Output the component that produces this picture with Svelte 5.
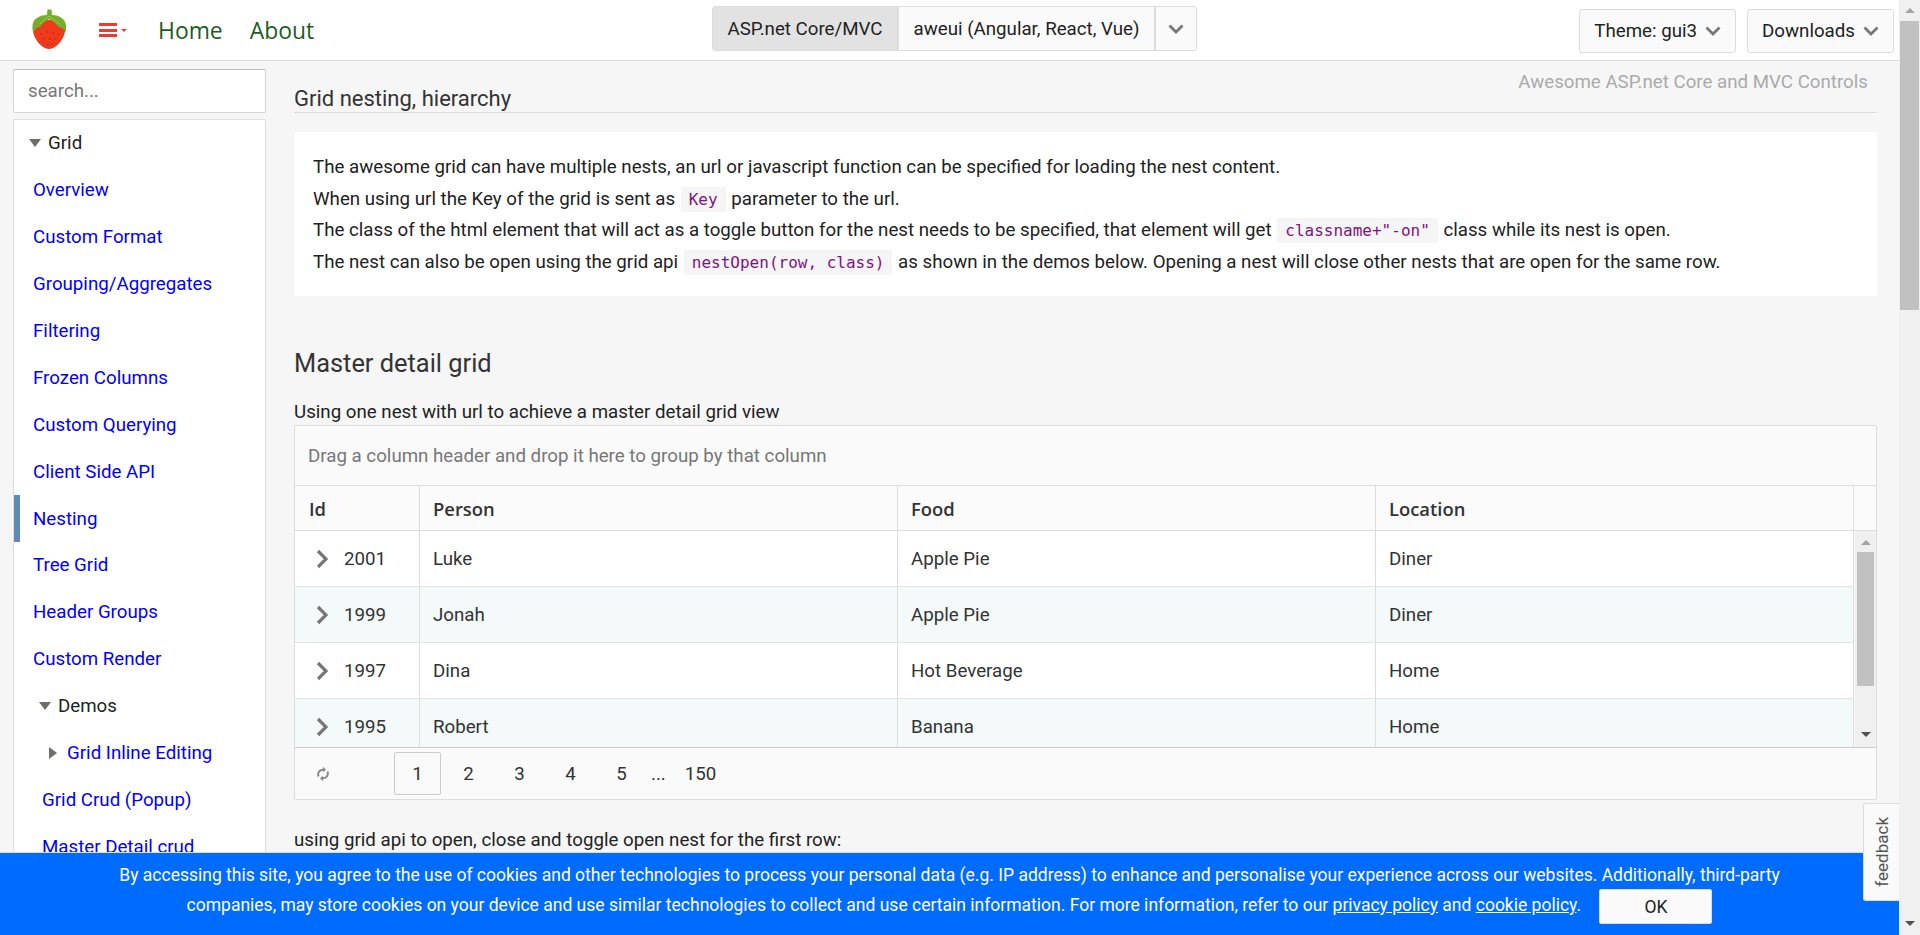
<script lang="ts">
  const nav = [
    "Overview",
    "Custom Format",
    "Grouping/Aggregates",
    "Filtering",
    "Frozen Columns",
    "Custom Querying",
    "Client Side API",
    "Nesting",
    "Tree Grid",
    "Header Groups",
    "Custom Render",
  ];

  const rows = [
    { id: 2001, person: "Luke", food: "Apple Pie", location: "Diner" },
    { id: 1999, person: "Jonah", food: "Apple Pie", location: "Diner" },
    { id: 1997, person: "Dina", food: "Hot Beverage", location: "Home" },
    { id: 1995, person: "Robert", food: "Banana", location: "Home" },
  ];

  const pages = ["2", "3", "4", "5"];
</script>

<div class="page">
  <div class="viewport">
    <header class="top">
      <svg class="logo" viewBox="0 0 36 42" width="36" height="42" aria-label="logo">
        <path d="M2 18C0 28 10 41 18 41s18-13 16-23C32 10 4 10 2 18z" fill="#f03a1c" />
        <path d="M16.5 1.5h4l.5 5.5c6 0 13 3 14 10v7c-2-3-4-4-7-5l-4-4-6-4-6 4-3 4c-1 0-4 1-7 5l-.5-5C1 10 10 7 16 7z" fill="#76ad2a" />
        <path d="M18 8l-9 8M18 8l10 8" stroke="#9ccc4a" stroke-width="1" fill="none" />
        <g fill="#b3260f">
          <circle cx="10" cy="26" r=".8" /><circle cx="16" cy="24" r=".8" /><circle cx="22" cy="25" r=".8" />
          <circle cx="27" cy="26" r=".8" /><circle cx="13" cy="31" r=".8" /><circle cx="19" cy="31" r=".8" />
          <circle cx="24" cy="31" r=".8" /><circle cx="17" cy="36" r=".8" /><circle cx="21" cy="36" r=".8" />
        </g>
      </svg>
      <button class="burger" aria-label="menu">
        <span class="bars"><i></i><i></i><i></i></span>
        <span class="caret"></span>
      </button>
      <a class="toplink" href="#home">Home</a>
      <a class="toplink" href="#about">About</a>

      <div class="switch">
        <span class="seg active">ASP.net Core/MVC</span>
        <span class="seg">aweui (Angular, React, Vue)</span>
        <span class="seg more">
          <svg width="16" height="10" viewBox="0 0 16 10"><path d="M1.5 1.5L8 8l6.5-6.5" class="chev" /></svg>
        </span>
      </div>

      <div class="actions">
        <button class="drop theme">
          Theme: gui3
          <svg width="16" height="10" viewBox="0 0 16 10"><path d="M1.5 1.5L8 8l6.5-6.5" class="chev" /></svg>
        </button>
        <button class="drop">
          Downloads
          <svg width="16" height="10" viewBox="0 0 16 10"><path d="M1.5 1.5L8 8l6.5-6.5" class="chev" /></svg>
        </button>
      </div>
    </header>

    <div class="body">
      <aside class="side">
        <input class="search" placeholder="search..." />
        <nav class="tree">
          <div class="node head"><span class="tri down"></span>Grid</div>
          {#each nav as item}
            <a class="node" class:current={item === "Nesting"} href="#item">{item}</a>
          {/each}
          <div class="node head sub"><span class="tri down"></span>Demos</div>
          <a class="node sub2" href="#item"><span class="tri right"></span>Grid Inline Editing</a>
          <a class="node sub" href="#item">Grid Crud (Popup)</a>
          <a class="node sub" href="#item">Master Detail crud</a>
        </nav>
      </aside>

      <main class="main">
        <div class="titlebar">
          <h1>Grid nesting, hierarchy</h1>
          <span class="tagline">Awesome ASP.net Core and MVC Controls</span>
        </div>

        <section class="info">
          <p>The awesome grid can have multiple nests, an url or javascript function can be specified for loading the nest content.</p>
          <p>When using url the Key of the grid is sent as <code>Key</code> parameter to the url.</p>
          <p>The class of the html element that will act as a toggle button for the nest needs to be specified, that element will get <code>classname+"-on"</code> class while its nest is open.</p>
          <p>The nest can also be open using the grid api <code>nestOpen(row, class)</code> as shown in the demos below. Opening a nest will close other nests that are open for the same row.</p>
        </section>

        <h2>Master detail grid</h2>
        <p class="lead">Using one nest with url to achieve a master detail grid view</p>

        <div class="grid">
          <div class="groupbar">Drag a column header and drop it here to group by that column</div>
          <div class="ghead">
            <div class="cell idcol">Id</div>
            <div class="cell">Person</div>
            <div class="cell">Food</div>
            <div class="cell">Location</div>
            <div class="gap"></div>
          </div>
          <div class="gbody">
            <div class="grows">
              {#each rows as row, i}
                <div class="row" class:alt={i % 2 === 1}>
                  <div class="cell idcol">
                    <svg width="12" height="20" viewBox="0 0 12 20"><path d="M2 2l8 8-8 8" class="rowchev" /></svg>
                    <span>{row.id}</span>
                  </div>
                  <div class="cell">{row.person}</div>
                  <div class="cell">{row.food}</div>
                  <div class="cell">{row.location}</div>
                </div>
              {/each}
            </div>
            <div class="gscroll">
              <span class="arrow up"></span>
              <span class="thumb"></span>
              <span class="arrow dn"></span>
            </div>
          </div>
          <div class="pager">
            <svg class="reload" width="14" height="16" viewBox="0 0 14 16">
              <path d="M2.5 10.5C1 7 3.5 3.5 7.5 3.8M11.5 5.5C13 9 10.5 12.5 6.5 12.2" fill="none" stroke="#888" stroke-width="2" />
              <path d="M7 .8l3 3-3 2.4zM7 15.2l-3-3 3-2.4z" fill="#888" />
            </svg>
            <span class="pg on">1</span>
            {#each pages as p}
              <span class="pg">{p}</span>
            {/each}
            <span class="dots">...</span>
            <span class="pg last">150</span>
          </div>
        </div>

        <p class="lead after">using grid api to open, close and toggle open nest for the first row:</p>
      </main>
    </div>
  </div>

  <div class="pagebar">
    <span class="arrow up"></span>
    <span class="pthumb"></span>
  </div>

  <div class="cookie">
    <div class="cookietext">
      By accessing this site, you agree to the use of cookies and other technologies to process your personal data (e.g. IP address) to enhance and personalise your experience across our websites. Additionally, <span class="nobreak">third-party</span> companies, may store cookies on your device and use similar technologies to collect and use certain information. For more information, refer to our <a href="#privacy">privacy policy</a> and <a href="#cookie">cookie policy</a>.
      <button class="ok">OK</button>
    </div>
  </div>

  <button class="feedback"><span>feedback</span></button>
  <span class="arrow dn pagedown"></span>
</div>

<style>
  :global(body) {
    margin: 0;
    overflow: hidden;
    background: #f6f6f6;
  }

  .page {
    display: flex;
    height: 935px;
    overflow: hidden;
    font-family: Roboto, "Liberation Sans", sans-serif;
    font-size: 18.72px;
    color: #222;
  }

  .viewport {
    width: 1899px;
    display: flex;
    flex-direction: column;
    overflow: hidden;
  }

  .top {
    flex: none;
    height: 60px;
    box-sizing: border-box;
    display: flex;
    align-items: center;
    background: #fff;
    position: relative;
    padding-left: 31px;
  }

  .logo {
    margin-top: -2px;
  }

  .burger {
    display: flex;
    align-items: center;
    gap: 4px;
    margin-left: 32px;
    padding: 0;
    background: none;
    border: none;
  }

  .bars {
    display: flex;
    flex-direction: column;
    gap: 2.5px;
    width: 18px;
  }

  .bars i {
    display: block;
    height: 3px;
    background: #ee3a32;
  }

  .caret {
    border: 3px solid transparent;
    border-top: 3px solid #ee3a32;
    margin-top: 3px;
  }

  .toplink {
    margin-left: 31px;
    font-family: "Open Sans", sans-serif;
    font-size: 22.9px;
    color: #1c5e1c;
    text-decoration: none;
  }

  .toplink + .toplink {
    margin-left: 27px;
  }

  .switch {
    position: absolute;
    left: 712px;
    top: 6px;
    display: flex;
    height: 45px;
    box-sizing: border-box;
    border: 1px solid #ddd;
    border-radius: 3px;
    background: #fafafa;
  }

  .seg {
    display: flex;
    align-items: center;
    padding: 0 14.5px;
    border-right: 2px solid #ddd;
  }

  .seg.active {
    background: #e2e2e2;
  }

  .seg.more {
    border-right: none;
    padding: 0 12px;
  }

  .chev {
    fill: none;
    stroke: #777;
    stroke-width: 2.8;
  }

  .actions {
    margin-left: auto;
    display: flex;
    gap: 11px;
    padding-right: 5px;
    padding-top: 1px;
  }

  .drop {
    display: flex;
    align-items: center;
    gap: 8px;
    height: 44px;
    padding: 0 14px;
    background: #fafafa;
    border: 1px solid #ddd;
    border-radius: 3px;
    font: inherit;
    color: #222;
  }

  .body {
    flex: 1;
    min-height: 0;
    display: flex;
    border-top: 1px solid #ddd;
    background: #f6f6f6;
  }

  .side {
    flex: none;
    width: 253px;
    margin-left: 13px;
    padding-top: 8px;
    display: flex;
    flex-direction: column;
    gap: 6px;
  }

  .search {
    height: 44px;
    box-sizing: border-box;
    width: 100%;
    padding: 0 14px;
    border: 1px solid #d4d4d4;
    border-top-color: #bbb;
    border-radius: 2px;
    font: inherit;
    background: #fff;
    outline: none;
  }

  .search::placeholder {
    color: #777;
    opacity: 1;
  }

  .tree {
    flex: 1;
    background: #fff;
    border: 1px solid #ddd;
    border-radius: 2px 2px 0 0;
  }

  .node {
    display: flex;
    align-items: center;
    height: 46.9px;
    padding-left: 19px;
    color: #00f;
    text-decoration: none;
    border-left: 0 solid transparent;
  }

  .node.current {
    padding-left: 13px;
    border-left: 6px solid #5f8ab5;
  }

  .node.head {
    color: #222;
    padding-left: 15px;
  }

  .node.head.sub {
    padding-left: 25px;
  }

  .node.sub {
    padding-left: 28px;
  }

  .node.sub2 {
    padding-left: 35px;
  }

  .tri {
    display: inline-block;
    margin-right: 7px;
  }

  .tri.down {
    border-left: 6px solid transparent;
    border-right: 6px solid transparent;
    border-top: 8px solid #6b6f68;
  }

  .tri.right {
    border-top: 6px solid transparent;
    border-bottom: 6px solid transparent;
    border-left: 8px solid #6b6f68;
    margin-right: 10px;
  }

  .main {
    flex: none;
    width: 1583px;
    margin-left: 28px;
  }

  .titlebar {
    display: flex;
    justify-content: space-between;
    height: 52px;
    box-sizing: border-box;
    border-bottom: 1px solid #ddd;
  }

  h1 {
    margin: 0;
    align-self: flex-end;
    font-size: 22px;
    font-weight: 400;
    line-height: 26px;
    color: #333;
  }

  .tagline {
    padding: 10px 9px 0 0;
    color: #aaa;
    line-height: 22px;
  }

  .info {
    margin-top: 19px;
    height: 164px;
    box-sizing: border-box;
    padding: 20px 19px;
    background: #fff;
  }

  .info p {
    margin: 0;
    line-height: 31.7px;
    white-space: nowrap;
  }

  code {
    font-family: "DejaVu Sans Mono", monospace;
    font-size: 16px;
    line-height: 1;
    color: #80137f;
    background: #f5f5f5;
    padding: 3px 8px;
    margin: 0 1px;
  }

  h2 {
    margin: 51px 0 0;
    font-size: 25.4px;
    font-weight: 400;
    line-height: 32px;
    color: #333;
  }

  .lead {
    margin: 20px 0 0;
    line-height: 26px;
  }

  .lead.after {
    margin-top: 27px;
  }

  .grid {
    border: 1px solid #ddd;
    border-radius: 2px;
    background: #fafafa;
  }

  .groupbar {
    height: 59px;
    line-height: 60px;
    padding-left: 13px;
    color: #777;
    border-bottom: 1px solid #ddd;
  }

  .ghead {
    display: flex;
    height: 44px;
    border-bottom: 1px solid #ddd;
    font-family: "Open Sans", sans-serif;
    font-size: 18.4px;
    font-weight: 600;
    background: #fbfbfb;
  }

  .cell {
    flex: 1;
    display: flex;
    align-items: center;
    padding-left: 13px;
    border-right: 1px solid #ddd;
    color: #333;
    min-width: 0;
  }

  .idcol {
    flex: none;
    width: 125px;
    box-sizing: border-box;
  }

  .ghead .idcol {
    padding-left: 14px;
  }

  .gap {
    width: 22px;
    flex: none;
  }

  .gbody {
    display: flex;
    height: 216px;
    overflow: hidden;
    border-bottom: 1px solid #ccc;
  }

  .grows {
    flex: 1;
    min-width: 0;
    background: #fff;
    border-right: 1px solid #ddd;
  }

  .row {
    display: flex;
    height: 55px;
    border-bottom: 1px solid #e2e2e2;
    background: #fff;
  }

  .row.alt {
    background: #f4f9f9;
  }

  .row .cell:last-child {
    border-right: none;
  }

  .row .idcol {
    padding-left: 21px;
    gap: 16px;
  }

  .rowchev {
    fill: none;
    stroke: #777;
    stroke-width: 3.2;
  }

  .gscroll {
    flex: none;
    width: 21px;
    margin-left: 1px;
    background: #f0f0f0;
    display: flex;
    flex-direction: column;
    align-items: center;
  }

  .arrow {
    display: block;
    flex: none;
    border-left: 5px solid transparent;
    border-right: 5px solid transparent;
  }

  .arrow.up {
    border-bottom: 5px solid #a3a3a3;
    margin-top: 9px;
  }

  .arrow.dn {
    border-top: 5px solid #505050;
    margin-top: 46px;
  }

  .thumb {
    width: 17px;
    height: 134px;
    margin-top: 7px;
    background: #c1c1c1;
  }

  .pager {
    display: flex;
    align-items: center;
    height: 51px;
  }

  .reload {
    margin-left: 21px;
    margin-right: 64px;
  }

  .pg {
    width: 47px;
    height: 43px;
    box-sizing: border-box;
    margin-right: 4px;
    display: flex;
    align-items: center;
    justify-content: center;
    border: 1px solid transparent;
    border-radius: 2px;
    color: #333;
  }

  .pg.on {
    border-color: #ccc;
    background: #f9f9f9;
  }

  .pg.last {
    margin-left: -2px;
  }

  .dots {
    width: 28px;
    margin-left: 2px;
    color: #333;
  }

  .pagebar {
    flex: none;
    width: 21px;
    background: #f0f0f0;
    display: flex;
    flex-direction: column;
    align-items: center;
  }

  .pagebar .arrow.up {
    margin-top: 8px;
    margin-bottom: 8px;
  }

  .pthumb {
    width: 19px;
    height: 289px;
    background: #c1c1c1;
  }

  .arrow.pagedown {
    position: fixed;
    right: 5px;
    top: 921px;
    margin: 0;
  }

  .cookie {
    position: fixed;
    left: 0;
    bottom: 0;
    width: 1899px;
    height: 83px;
    background: #006bff;
    color: #fff;
    display: flex;
    justify-content: center;
    border-top: 1px solid #ddd;
    box-sizing: border-box;
  }

  .cookietext {
    width: 1700px;
    text-align: center;
    font-size: 17.5px;
    line-height: 30px;
    padding-top: 7px;
  }

  .nobreak {
    white-space: nowrap;
  }

  .cookietext a {
    color: #fff;
  }

  .ok {
    width: 113px;
    height: 35px;
    margin: -2px 0 -3px 14px;
    background: #fafafa;
    border: 1px solid #ddd;
    border-radius: 2px;
    font: inherit;
    color: #222;
    vertical-align: middle;
  }

  .feedback {
    position: fixed;
    left: 1863px;
    top: 803px;
    width: 36px;
    height: 98px;
    padding: 0;
    box-sizing: border-box;
    background: #fafafa;
    border: 1px solid #ddd;
    border-right: none;
    border-radius: 3px 0 0 3px;
    color: #555;
    font: inherit;
    font-size: 17px;
    display: flex;
    align-items: center;
    justify-content: center;
  }

  .feedback span {
    writing-mode: vertical-rl;
    transform: rotate(180deg);
  }
</style>
